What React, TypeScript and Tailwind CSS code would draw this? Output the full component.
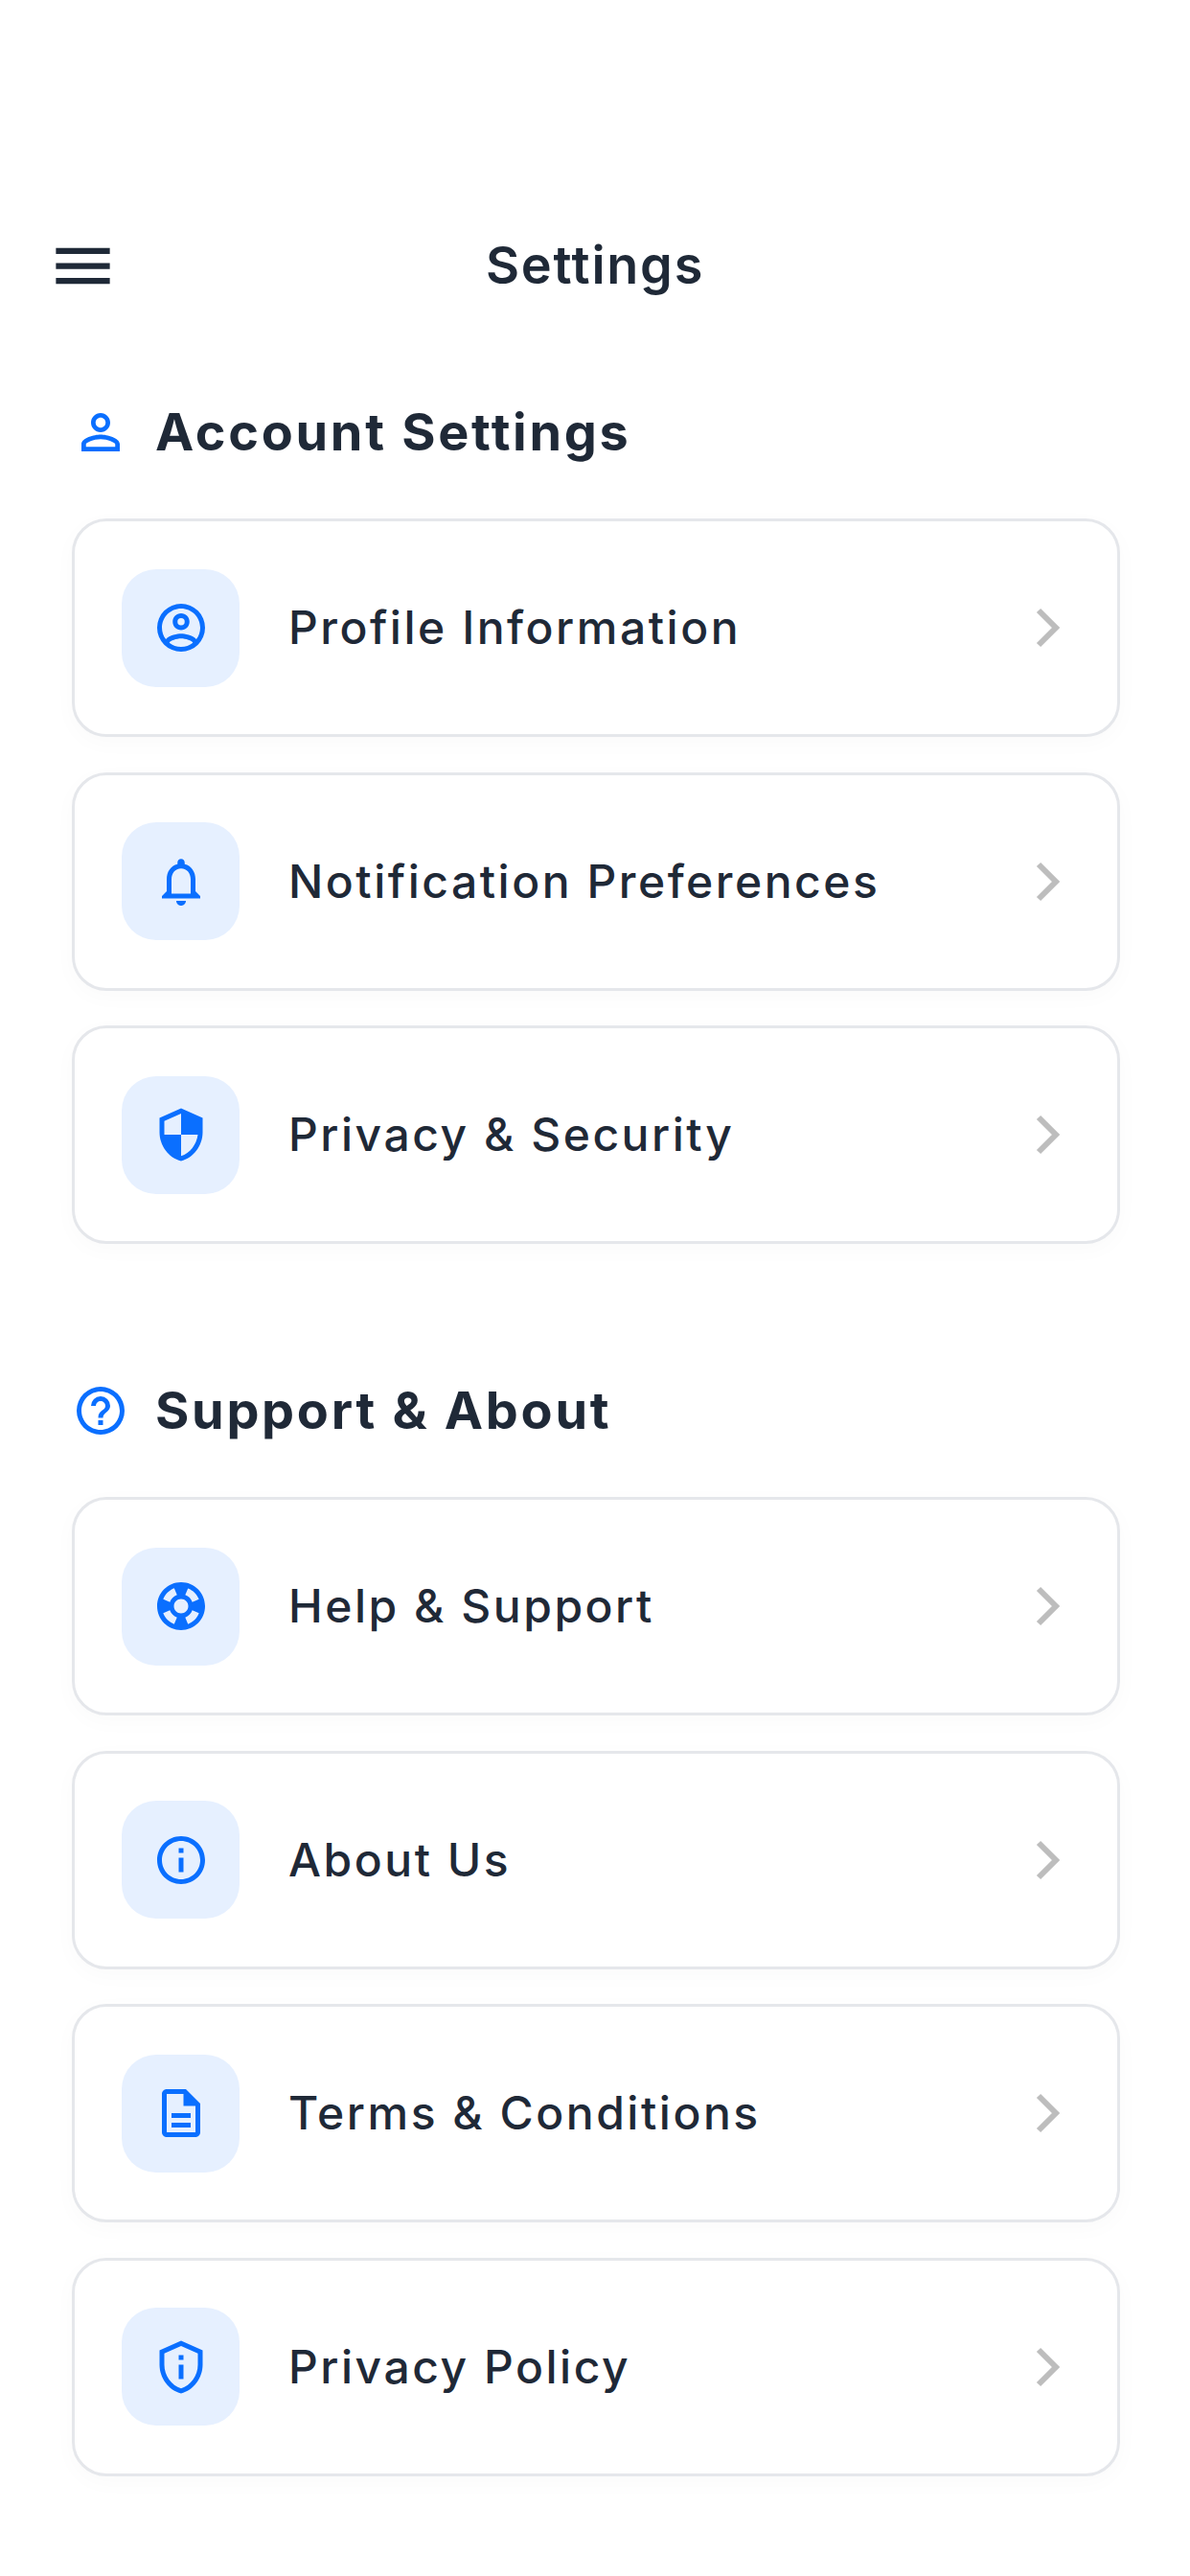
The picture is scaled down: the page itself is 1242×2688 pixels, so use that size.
const ic = {
  profile: "M12,2A10,10 0 0,0 2,12A10,10 0 0,0 12,22A10,10 0 0,0 22,12A10,10 0 0,0 12,2M7.07,18.28C7.5,17.38 10.12,16.5 12,16.5C13.88,16.5 16.5,17.38 16.93,18.28C15.57,19.36 13.86,20 12,20C10.14,20 8.43,19.36 7.07,18.28M18.36,16.83C16.93,15.09 13.46,14.5 12,14.5C10.54,14.5 7.07,15.09 5.64,16.83C4.62,15.5 4,13.82 4,12C4,7.59 7.59,4 12,4C16.41,4 20,7.59 20,12C20,13.82 19.38,15.5 18.36,16.83M12,6C10.06,6 8.5,7.56 8.5,9.5C8.5,11.44 10.06,13 12,13C13.94,13 15.5,11.44 15.5,9.5C15.5,7.56 13.94,6 12,6M12,11A1.5,1.5 0 0,1 10.5,9.5A1.5,1.5 0 0,1 12,8A1.5,1.5 0 0,1 13.5,9.5A1.5,1.5 0 0,1 12,11Z",
  bell: "M12 22c1.1 0 2-.9 2-2h-4c0 1.1.9 2 2 2zm6-6v-5c0-3.07-1.63-5.64-4.5-6.32V4c0-.83-.67-1.5-1.5-1.5s-1.5.67-1.5 1.5v.68C7.64 5.36 6 7.92 6 11v5l-2 2v1h16v-1l-2-2zm-2 1H8v-6c0-2.48 1.51-4.5 4-4.5s4 2.02 4 4.5v6z",
  security: "M12 1L3 5v6c0 5.55 3.84 10.74 9 12 5.16-1.26 9-6.45 9-12V5l-9-4zm0 10.99h7c-.53 4.12-3.28 7.79-7 8.94V12H5V6.3l7-3.11v8.8z",
  help: "M11,18H13V16H11V18M12,2A10,10 0 0,0 2,12A10,10 0 0,0 12,22A10,10 0 0,0 22,12A10,10 0 0,0 12,2M12,20C7.59,20 4,16.41 4,12C4,7.59 7.59,4 12,4C16.41,4 20,7.59 20,12C20,16.41 16.41,20 12,20M12,6A4,4 0 0,0 8,10H10A2,2 0 0,1 12,8A2,2 0 0,1 14,10C14,12 11,11.75 11,15H13C13,12.75 16,12.5 16,10A4,4 0 0,0 12,6Z",
  person: "M12 5.9c1.16 0 2.1.94 2.1 2.1s-.94 2.1-2.1 2.1S9.9 9.16 9.9 8s.94-2.1 2.1-2.1m0 9c2.97 0 6.1 1.46 6.1 2.1v1.1H5.9V17c0-.64 3.13-2.1 6.1-2.1M12 4C9.79 4 8 5.79 8 8s1.79 4 4 4 4-1.79 4-4-1.79-4-4-4zm0 9c-2.67 0-8 1.34-8 4v3h16v-3c0-2.66-5.33-4-8-4z",
  support: "M12 2C6.48 2 2 6.48 2 12s4.48 10 10 10 10-4.48 10-10S17.52 2 12 2zm7.46 7.12l-2.78 1.15c-.51-1.36-1.58-2.44-2.95-2.94l1.15-2.78c2.1.8 3.77 2.47 4.58 4.57zM12 15c-1.66 0-3-1.34-3-3s1.34-3 3-3 3 1.34 3 3-1.34 3-3 3zM9.13 4.54l1.17 2.78c-1.38.5-2.47 1.59-2.98 2.97L4.54 9.13c.81-2.11 2.48-3.78 4.59-4.59zM4.54 14.87l2.78-1.15c.51 1.38 1.59 2.46 2.97 2.96l-1.17 2.78c-2.1-.81-3.77-2.48-4.58-4.59zm10.34 4.59l-1.15-2.78c1.37-.51 2.45-1.59 2.95-2.97l2.78 1.17c-.81 2.1-2.48 3.77-4.58 4.58z",
  info: "M11 7h2v2h-2zm0 4h2v6h-2zm1-9C6.48 2 2 6.48 2 12s4.48 10 10 10 10-4.48 10-10S17.52 2 12 2zm0 18c-4.41 0-8-3.59-8-8s3.59-8 8-8 8 3.59 8 8-3.59 8-8 8z",
  doc: "M8 16h8v2H8zm0-4h8v2H8zm6-10H6c-1.1 0-2 .9-2 2v16c0 1.1.89 2 1.99 2H18c1.1 0 2-.9 2-2V8l-6-6zm4 18H6V4h7v5h5v11z",
  policy: "M12 3.19l7 3.11V11c0 4.52-2.98 8.69-7 9.93-4.02-1.24-7-5.41-7-9.93V6.3l7-3.11M12 1L3 5v6c0 5.55 3.84 10.74 9 12 5.16-1.26 9-6.45 9-12V5l-9-4zm-1 6h2v2h-2zm0 4h2v6h-2z",
  menu: "M3 18h18v-2H3v2zm0-5h18v-2H3v2zm0-7v2h18V6H3z",
};

function Icon({ d, className }: { d: string; className: string }) {
  return (
    <svg viewBox="0 0 24 24" className={className} fill="currentColor" aria-hidden="true">
      <path d={d} />
    </svg>
  );
}

function Row({ icon, label }: { icon: string; label: string }) {
  return (
    <div className="flex h-[228px] items-center rounded-[36px] border-[3px] border-[#e5e7eb] bg-white pl-[49px] pr-[57px] shadow-[0_6px_24px_rgba(0,0,0,0.025)]">
      <div className="flex h-[123px] w-[123px] shrink-0 items-center justify-center rounded-[36px] bg-[#e6f0ff] text-[#0a6fff]">
        <Icon d={icon} className="h-[60px] w-[60px]" />
      </div>
      <span className="ml-[51px] flex-1 text-[48px] font-medium leading-[60px] tracking-[2.52px] text-[#1f2937]">
        {label}
      </span>
      <svg viewBox="0 0 30 46" className="h-[46px] w-[30px] text-[#bdbdbd]" fill="none" stroke="currentColor" strokeWidth="6" aria-hidden="true">
        <path d="M5 5l18 18L5 41" />
      </svg>
    </div>
  );
}

function Section({ icon, title, rows, className }: { icon: string; title: string; rows: [string, string][]; className: string }) {
  return (
    <section className={className}>
      <div className="flex h-[60px] items-center gap-[27px]">
        <Icon d={icon} className="h-[60px] w-[60px] shrink-0 text-[#0a6fff]" />
        <h2 className="text-[54px] font-bold leading-[60px] tracking-[2.7px] text-[#1f2937]">{title}</h2>
      </div>
      <div className="mt-[60px] flex flex-col gap-[36.6px]">
        {rows.map(([i, l]) => (
          <Row key={l} icon={i} label={l} />
        ))}
      </div>
    </section>
  );
}

export default function App() {
  return (
    <div className="h-[2688px] w-[1242px] overflow-hidden bg-white pt-[229px] font-['Inter',sans-serif]">
      <header className="flex h-[96px] items-center justify-between px-[49px]">
        <Icon d={ic.menu} className="h-[75px] w-[75px] text-[#1f2937]" />
        <h1 className="text-[54px] font-semibold leading-[60px] tracking-[1.75px] text-[#1f2937]">Settings</h1>
        <div className="h-[75px] w-[75px]" />
      </header>
      <div className="pl-[75px] pr-[73px]">
        <Section
          className="mt-[96px]"
          icon={ic.person}
          title="Account Settings"
          rows={[
            [ic.profile, "Profile Information"],
            [ic.bell, "Notification Preferences"],
            [ic.security, "Privacy & Security"],
          ]}
        />
        <Section
          className="mt-[144px]"
          icon={ic.help}
          title="Support & About"
          rows={[
            [ic.support, "Help & Support"],
            [ic.info, "About Us"],
            [ic.doc, "Terms & Conditions"],
            [ic.policy, "Privacy Policy"],
          ]}
        />
      </div>
    </div>
  );
}
